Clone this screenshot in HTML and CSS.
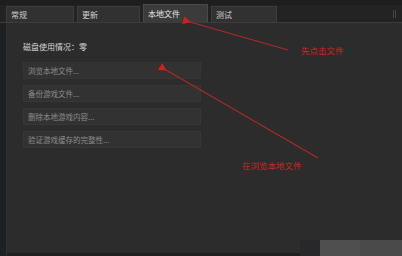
FILE: index.html
```html
<!DOCTYPE html>
<html>
<head>
    <link rel="stylesheet" href="styles.css">
</head>
<body>
    <div class="window">
        <div class="topbar"></div>
        <div class="tabs">
            <div class="tab tab-general">常规</div>
            <div class="tab tab-update">更新</div>
            <div class="tab tab-local active">本地文件</div>
            <div class="tab tab-beta">测试</div>
            <div class="tabs-rest"><span class="grip"></span></div>
        </div>
        <div class="body">
            <div class="side"></div>
            <div class="panel">
                <div class="disk">磁盘使用情况：零</div>
                <div class="actions">
                    <div class="btn">浏览本地文件...</div>
                    <div class="btn">备份游戏文件...</div>
                    <div class="btn">删除本地游戏内容...</div>
                    <div class="btn">验证游戏缓存的完整性...</div>
                </div>
            </div>
        </div>
        <div class="watermark">
            <span class="wm-a"></span>
            <span class="wm-b"></span>
            <span class="wm-c"></span>
        </div>
    </div>

    <!-- red annotations drawn over the screenshot -->
    <svg class="marks" width="402" height="256" viewBox="0 0 402 256">
        <defs>
            <marker id="head" markerWidth="8" markerHeight="8" refX="1" refY="4" orient="auto" markerUnits="userSpaceOnUse">
                <path d="M8 0 L0 4 L8 8 Z" fill="#d41e1e"/>
            </marker>
        </defs>
        <line x1="288" y1="50" x2="190" y2="22" stroke="#a82a22" stroke-width="1.3" marker-end="url(#head)"/>
        <line x1="318" y1="158" x2="166" y2="70" stroke="#a82a22" stroke-width="1.3" marker-end="url(#head)"/>
    </svg>
    <div class="note note-1">先点击文件</div>
    <div class="note note-2">在浏览本地文件</div>
</body>
</html>
```

FILE: styles.css
```css
* {
    margin: 0;
    padding: 0;
    box-sizing: border-box;
}

body {
    width: 402px;
    height: 256px;
    background: #1c1e21;
    overflow: hidden;
    font-family: 'Noto Sans CJK SC', 'Noto Sans', sans-serif;
    position: relative;
}

.window {
    height: 100%;
    display: flex;
    flex-direction: column;
}

.topbar {
    height: 5px;
    background: #1e1e1f;
}

.tabs {
    height: 18px;
    display: flex;
    align-items: flex-end;
    gap: 3px;
    padding-left: 6px;
    background: #232324;
    border-bottom: 1px solid #3c3c3c;
}

.tab {
    height: 16px;
    background: #313132;
    border: 1px solid #3d3d3e;
    border-bottom: none;
    color: #cfcfcf;
    font-size: 8px;
    line-height: 15px;
    padding-left: 4px;
}

.tab-general { width: 68px; }
.tab-update { width: 63px; }
.tab-local { width: 65px; }
.tab-beta { width: 66px; }

.tab.active {
    height: 18px;
    line-height: 18px;
    background: #3b3b3c;
    border-color: #4a4a4a;
    color: #e6e6e6;
}

.tabs-rest {
    flex: 1;
    height: 100%;
    display: flex;
    justify-content: flex-end;
    align-items: center;
    padding-right: 6px;
}

.grip {
    width: 3px;
    height: 8px;
    border-left: 1px solid #444;
    border-right: 1px solid #444;
}

.body {
    flex: 1;
    display: flex;
}

.side {
    width: 7px;
    background: #1d2024;
    border-right: 1px solid #2a3036;
}

.panel {
    flex: 1;
    background: #2c2c2d;
    border-bottom: 3px solid #1f1f20;
    padding: 17px 0 0 16px;
}

.disk {
    color: #d2d2d2;
    font-size: 8px;
    line-height: 13px;
}

.actions {
    margin-top: 9px;
    width: 178px;
    display: flex;
    flex-direction: column;
    gap: 6px;
}

.btn {
    height: 17px;
    background: #323233;
    border: 1px solid #363637;
    color: #8c8c8c;
    font-size: 7.5px;
    line-height: 15px;
    padding-left: 4px;
}

.watermark {
    position: absolute;
    right: 0;
    bottom: 0;
    display: flex;
    height: 16px;
}

.wm-a { width: 20px; background: #28282a; }
.wm-b { width: 40px; background: #4f4f50; }
.wm-c { width: 42px; background: #4a4a4b; }

.marks {
    position: absolute;
    left: 0;
    top: 0;
}

.note {
    position: absolute;
    color: #d22222;
    font-size: 8.5px;
    line-height: 12px;
}

.note-1 {
    left: 301px;
    top: 44px;
}

.note-2 {
    left: 242px;
    top: 159px;
}
```
